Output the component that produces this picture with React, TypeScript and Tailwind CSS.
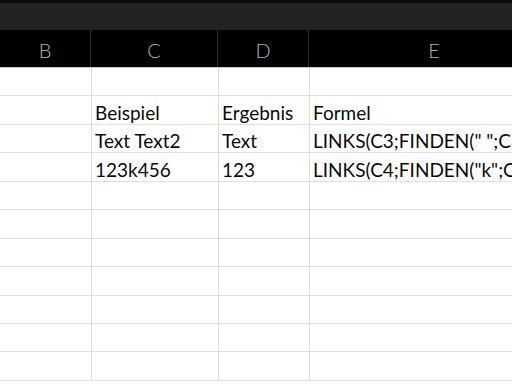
import React from "react";

const cols = [
  { key: "B", w: "w-[92px]" },
  { key: "C", w: "w-[127px]" },
  { key: "D", w: "w-[91px]" },
  { key: "E", w: "w-[250px]" },
];

const data: Record<number, string[]> = {
  1: ["", "Beispiel", "Ergebnis", "Formel"],
  2: ["", "Text Text2", "Text", 'LINKS(C3;FINDEN(" ";C3)-1)'],
  3: ["", "123k456", "123", 'LINKS(C4;FINDEN("k";C4)-1)'],
};

export default function App() {
  const rows = Array.from({ length: 11 }, (_, i) => i);
  return (
    <div className="w-[512px] h-[384px] overflow-hidden bg-white flex flex-col" style={{ fontFamily: "Lato, 'Liberation Sans', sans-serif" }}>
      <div className="h-[30px] flex-none bg-[#222222] border-t-[3px] border-[#0c0c0c]" />
      <div className="h-[38px] flex-none flex bg-black border-b border-[#c8c8c8] -ml-px">
        {cols.map((c, i) => (
          <div
            key={c.key}
            className={`${c.w} flex-none flex items-center justify-center pt-[2px] text-[20px] font-light text-[#b4b4b4] ${i < 3 ? "border-r border-[#2e2e2e]" : ""} ${i === 0 ? "pl-px" : ""}`}
          >
            {c.key}
          </div>
        ))}
      </div>
      <div className="flex-1 flex flex-col">
        {rows.map((r) => (
          <div key={r} className="h-[28.45px] flex-none flex border-b border-[#e0e0e0]">
            {cols.map((c, i) => (
              <div
                key={c.key}
                className={`${c.w} flex-none flex items-end pb-[2px] pl-[3px] text-[19px] leading-none text-[#0a0a0a] whitespace-nowrap ${i < 3 ? "border-r border-[#dcdcdc]" : ""}`}
              >
                {data[r]?.[i] ?? ""}
              </div>
            ))}
          </div>
        ))}
      </div>
    </div>
  );
}
